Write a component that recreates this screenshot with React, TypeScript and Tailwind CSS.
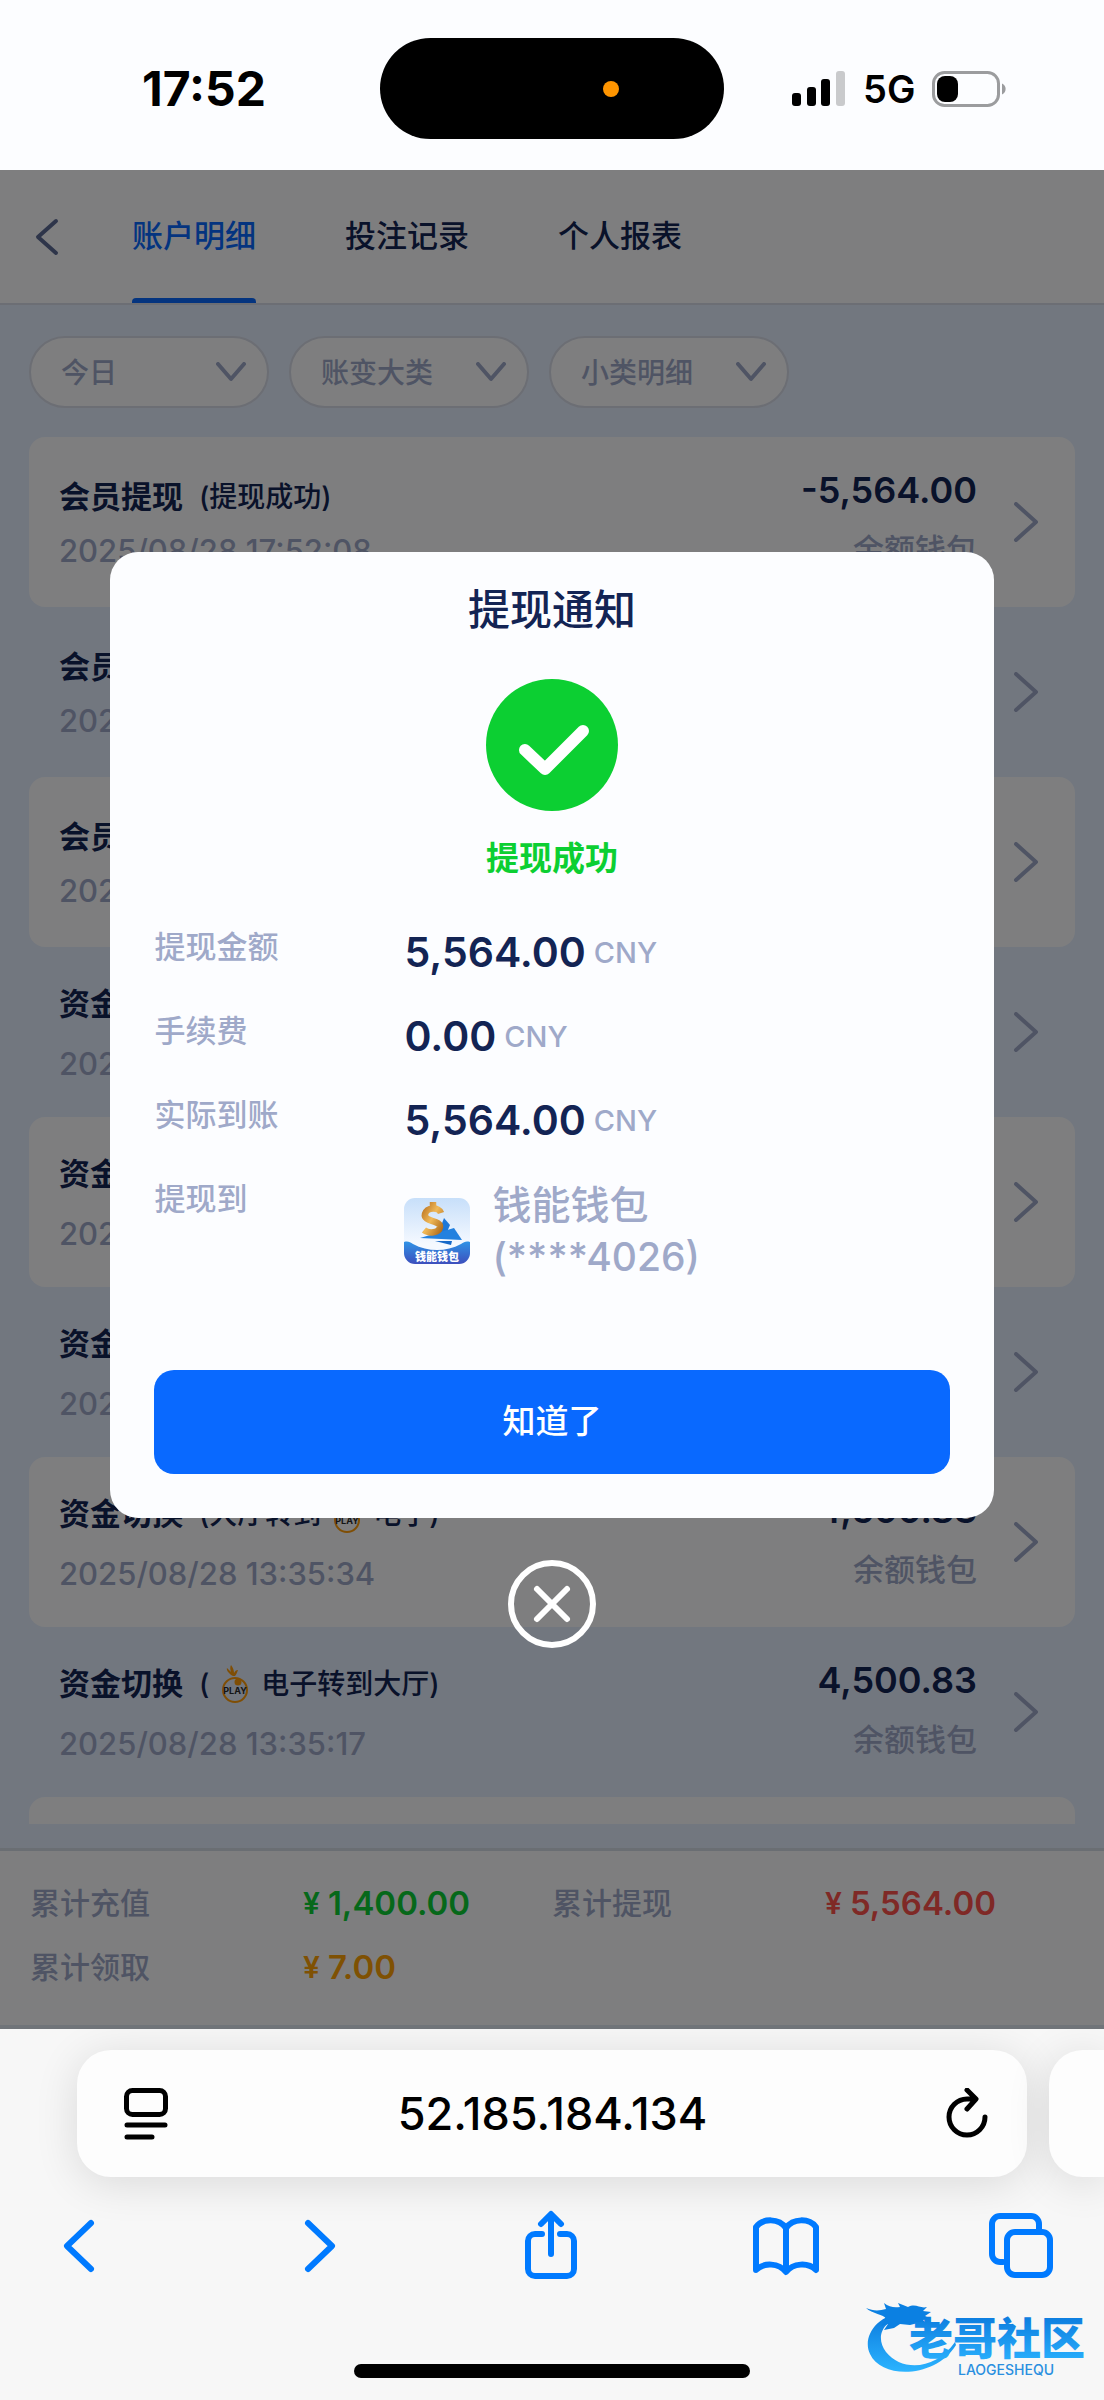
import type { ReactNode } from "react";

type RecordItem = {
  title: string;
  before?: string;
  after: string;
  logo?: boolean;
  time: string;
  amount: string;
};

const tabs = ["账户明细", "投注记录", "个人报表"];
const filters = ["今日", "账变大类", "小类明细"];

const records: RecordItem[] = [
  { title: "会员提现", after: "提现成功)", time: "2025/08/28 17:52:08", amount: "-5,564.00" },
  { title: "会员提现", after: "提现中)", time: "2025/08/28 17:51:20", amount: "-5,564.00" },
  { title: "会员提现", after: "申请提现)", time: "2025/08/28 17:50:46", amount: "-5,564.00" },
  { title: "资金切换", logo: true, after: "电子转到大厅)", time: "2025/08/28 17:49:52", amount: "5,564.83" },
  { title: "资金切换", logo: true, before: "大厅转到", after: "电子)", time: "2025/08/28 13:42:11", amount: "-4,500.83" },
  { title: "资金切换", logo: true, after: "电子转到大厅)", time: "2025/08/28 13:38:06", amount: "4,500.83" },
  { title: "资金切换", logo: true, before: "大厅转到", after: "电子)", time: "2025/08/28 13:35:34", amount: "-4,500.83" },
  { title: "资金切换", logo: true, after: "电子转到大厅)", time: "2025/08/28 13:35:17", amount: "4,500.83" },
];

const totals = [
  { label: "累计充值", value: "1,400.00", color: "text-[#0cd035]" },
  { label: "累计提现", value: "5,564.00", color: "text-[#ff524c]" },
  { label: "累计领取", value: "7.00", color: "text-[#ffa206]" },
];

const amounts = [
  { label: "提现金额", value: "5,564.00" },
  { label: "手续费", value: "0.00" },
  { label: "实际到账", value: "5,564.00" },
];

function StatusBar() {
  return (
    <header className="grid h-[170px] grid-cols-[1fr_344px_1fr] items-center bg-[#fcfdff] pt-[7px] text-black">
      <div className="pl-7 text-center text-[48px] leading-none font-bold">17:52</div>
      <div className="flex h-[101px] items-center justify-end rounded-full bg-black pr-[105px]">
        <span className="size-4 rounded-full bg-[#ff9500]" />
      </div>
      <div className="flex items-center gap-[17px] pl-[68px]">
        <svg className="h-[36px] w-[54px]" viewBox="0 0 54 36">
          <rect x="0" y="22" width="9" height="13" rx="3" />
          <rect x="15" y="16" width="9" height="19" rx="3" />
          <rect x="29" y="8" width="9" height="27" rx="3" />
          <rect x="44" y="0" width="9" height="35" rx="3" fill="#c9cacc" />
        </svg>
        <span className="text-[38px] leading-none font-semibold">5G</span>
        <svg className="h-[36px] w-[75px]" viewBox="0 0 75 36">
          <rect x="1.5" y="1.5" width="65" height="33" rx="11" fill="none" stroke="#9b9c9e" strokeWidth="3" />
          <rect x="5" y="5" width="21" height="26" rx="8" />
          <path d="M70 12.5a6 6 0 0 1 0 11z" fill="#9b9c9e" />
        </svg>
      </div>
    </header>
  );
}

function PlayLogo() {
  return (
    <svg className="mx-[12px] h-[38px] w-[28px]" viewBox="0 0 28 38">
      <path d="M12 11C8 9 5 5 6 3l4 4C9 4 9 2 10 0c2 3 3 5 3 8 1-2 2-3 4-3-1 3-2 5-3 6z" fill="#ff9d0a" />
      <circle cx="14" cy="25" r="12" fill="none" stroke="#ff9d0a" strokeWidth="2" />
      <circle cx="17" cy="17" r="3.500" fill="#ff9d0a" />
      <text x="14" y="29" textAnchor="middle" fontSize="9" fontWeight="700" fill="#2a2a2a">
        PLAY
      </text>
    </svg>
  );
}

function Record({ item, striped }: { item: RecordItem; striped: boolean }) {
  return (
    <li
      className={`flex h-[170px] items-center rounded-2xl pr-[36px] pl-[30px] ${striped ? "bg-[#fcfdff]" : ""}`}
    >
      <div className={`flex flex-1 flex-col pt-[4px] ${item.logo ? "gap-[20px]" : "gap-[14px]"}`}>
        <div className="flex h-10 items-center text-[28px] leading-[40px] font-medium text-[#132454]">
          <h3 className="mr-4 text-[31px] font-bold">{item.title}</h3>
          <span>({item.before}</span>
          {item.logo && <PlayLogo />}
          <span>{item.after}</span>
        </div>
        <time className="text-[31px] leading-[40px] font-medium text-[#9fa9c9]">{item.time}</time>
      </div>
      <div className="flex flex-col items-end gap-5 pb-1">
        <span className="text-[36px] leading-[40px] font-semibold text-[#132454]">{item.amount}</span>
        <span className="text-[31px] leading-[40px] font-medium text-[#9fa9c9]">余额钱包</span>
      </div>
      <svg className="ml-[36px] h-[40px] w-[26px]" viewBox="0 0 26 40" fill="none" stroke="#9fa9c9" strokeWidth="4" strokeLinecap="round" strokeLinejoin="round">
        <path d="M3 2l20 18L3 38" />
      </svg>
    </li>
  );
}

function WalletIcon() {
  return (
    <svg className="size-[66px] shrink-0" viewBox="0 0 66 66">
      <defs>
        <linearGradient id="walletSky" x1="0" y1="0" x2="0" y2="1">
          <stop offset="0" stopColor="#c7dffa" />
          <stop offset="0.7" stopColor="#f5f9ff" />
        </linearGradient>
        <linearGradient id="walletBand" x1="0" y1="0" x2="0" y2="1">
          <stop offset="0" stopColor="#3093e6" />
          <stop offset="1" stopColor="#3d4fbd" />
        </linearGradient>
        <linearGradient id="walletGold" x1="0" y1="0" x2="1" y2="1">
          <stop offset="0" stopColor="#b8701f" />
          <stop offset="0.5" stopColor="#f0b958" />
          <stop offset="1" stopColor="#b06c1c" />
        </linearGradient>
        <clipPath id="walletClip">
          <rect width="66" height="66" rx="11" />
        </clipPath>
      </defs>
      <g clipPath="url(#walletClip)">
        <rect width="66" height="66" fill="url(#walletSky)" />
        <path d="M40 20l6 7-3 7-9 2z" fill="#1e78d8" />
        <path d="M16 40l34-10 8 12z" fill="#2381df" />
        <path d="M31 43h17l-1 4z" fill="#1769c8" />
        <path d="M37 15c-2-6-14-6-16 1-2 8 16 6 15 13-1 6-11 7-16 3M29 4v5" fill="none" stroke="url(#walletGold)" strokeWidth="6.500" strokeLinejoin="round" />
        <path d="M0 44c4-1 6 0 9 2 15 8 33 8 48 0 3-2 5-3 9-2v22H0z" fill="url(#walletBand)" />
        <text x="33" y="63" textAnchor="middle" fontSize="11" fontWeight="900" fill="#fff">
          钱能钱包
        </text>
      </g>
    </svg>
  );
}

function WithdrawDialog() {
  return (
    <div className="absolute inset-0 flex flex-col items-center justify-center gap-[42px] bg-black/50">
      <section
        role="dialog"
        aria-labelledby="dialog-title"
        className="flex w-[80%] flex-col rounded-[28px] bg-[#fcfdff] px-11 pt-7 pb-11 text-[#132454]"
      >
        <h2 id="dialog-title" className="text-center text-[42px] leading-[60px] font-medium">
          提现通知
        </h2>
        <svg className="mx-auto mt-[39px] size-[132px]" viewBox="0 0 132 132">
          <circle cx="66" cy="66" r="66" fill="#0ccf32" />
          <path d="M39 71l20 19 38-38" fill="none" stroke="#fff" strokeWidth="12" strokeLinecap="round" strokeLinejoin="round" />
        </svg>
        <p className="mt-6 text-center text-[33px] leading-[46px] font-bold text-[#0ccf32]">提现成功</p>

        <dl className="mt-7">
          {amounts.map((row) => (
            <div key={row.label} className="flex h-[84px] items-start">
              <dt className="w-[250px] text-[31px] leading-[76px] font-medium text-[#9fa9c9]">{row.label}</dt>
              <dd className="flex items-center gap-[8px] leading-[84px]">
                <span className="text-[41px] font-semibold">{row.value}</span>
                <span className="pt-[2px] text-[29px] font-medium text-[#9fa9c9]">CNY</span>
              </dd>
            </div>
          ))}
          <div className="flex items-start font-medium text-[#9fa9c9]">
            <dt className="w-[250px] text-[31px] leading-[76px]">提现到</dt>
            <dd className="flex items-center gap-[22px] pt-[18px] text-[39px] leading-[52px]">
              <WalletIcon />
              <span>
                钱能钱包
                <br />
                (****4026)
              </span>
            </dd>
          </div>
        </dl>

        <button type="button" className="mt-[87px] h-[104px] rounded-[20px] bg-[#0969ff] text-[33px] font-medium text-white">
          知道了
        </button>
      </section>
      <button type="button" aria-label="关闭">
        <svg className="size-[88px]" viewBox="0 0 88 88" fill="none" stroke="#fff" strokeWidth="6" strokeLinecap="round">
          <circle cx="44" cy="44" r="41" />
          <path d="M29 29l30 30M59 29L29 59" />
        </svg>
      </button>
    </div>
  );
}

function AccountPage() {
  return (
    <main className="relative flex flex-col bg-[#e5eefe]">
      <nav className="flex h-[135px] items-stretch border-b-2 border-[#d8dce8] bg-[#fcfdff]">
        <button type="button" aria-label="返回" className="w-[132px] pl-[35px]">
          <svg className="h-[38px] w-[24px]" viewBox="0 0 24 38" fill="none" stroke="#5c6a95" strokeWidth="4" strokeLinecap="round" strokeLinejoin="round">
            <path d="M21 3L3 19l18 16" />
          </svg>
        </button>
        <div className="flex gap-[89px] text-[31px] font-medium">
          {tabs.map((tab, i) => (
            <button
              key={tab}
              type="button"
              className={`relative ${i === 0 ? "text-[#0969ff]" : "text-[#132454]"}`}
            >
              {tab}
              {i === 0 && <span className="absolute inset-x-0 bottom-0 h-[5px] rounded-t-[4px] bg-[#0969ff]" />}
            </button>
          ))}
        </div>
      </nav>

      <div className="flex gap-5 px-[29px] pt-[31px]">
        {filters.map((name) => (
          <div key={name} className="relative w-[240px]">
            <select
              aria-label={name}
              className="h-[72px] w-full appearance-none rounded-full border-2 border-[#d8dce8] bg-[#fcfdff] pt-[2px] pl-[30px] text-[28px] font-medium text-[#9fa9c9]"
            >
              <option>{name}</option>
            </select>
            <svg className="pointer-events-none absolute top-[26px] right-[22px] h-[20px] w-[31px]" viewBox="0 0 31 20" fill="none" stroke="#9fa9c9" strokeWidth="4" strokeLinecap="round" strokeLinejoin="round">
              <path d="M2 2l13 15L28 2" />
            </svg>
          </div>
        ))}
      </div>

      <ul className="mt-[29px] px-[29px]">
        {records.map((item, i) => (
          <Record key={item.time} item={item} striped={i % 2 === 0} />
        ))}
        <li className="h-[27px] rounded-t-2xl bg-[#fcfdff]" />
      </ul>

      <footer className="mt-6 border-t-[3px] border-b-[4px] border-t-[#d5dce6] border-b-[#e0e8f2] bg-[#fcfdff] px-[30px] pt-[20px] pb-[26px]">
        <dl className="grid grid-cols-2 text-[30px] leading-[64px] font-medium">
          {totals.map((total) => (
            <div key={total.label} className="flex">
              <dt className="w-[273px] text-[#9fa9c9]">{total.label}</dt>
              <dd className={`flex gap-[8px] font-semibold ${total.color}`}>
                <span>¥</span>
                <span className="text-[33px]">{total.value}</span>
              </dd>
            </div>
          ))}
        </dl>
      </footer>

      <WithdrawDialog />
    </main>
  );
}

function ToolButton({ label, children }: { label: string; children: ReactNode }) {
  return (
    <button type="button" aria-label={label}>
      <svg className="size-[72px]" viewBox="0 0 72 72" fill="none" stroke="#007aff" strokeWidth="6" strokeLinecap="round" strokeLinejoin="round">
        {children}
      </svg>
    </button>
  );
}

function CommunityLogo() {
  return (
    <svg className="absolute right-[14px] bottom-[22px] h-[82px] w-[226px]" viewBox="0 0 226 82">
      <defs>
        <linearGradient id="communityBlue" x1="0" y1="0" x2="0" y2="1">
          <stop offset="0" stopColor="#0a78dc" />
          <stop offset="1" stopColor="#2cb4ff" />
        </linearGradient>
      </defs>
      <path d="M40 17C12 18-2 42 6 58c12 26 66 24 86-9l-1-3C72 74 38 76 22 56 10 40 20 22 44 20z" fill="url(#communityBlue)" />
      <path d="M2 12c7 3 13 3 20 1l-2-6c5 4 10 5 16 4l-2-4 10 4c8-4 12 2 19 0l-4 4 8 1-6 4 6 3-8 1 5 5-10-2-8 2-10-1-6 4-10 2 4-6-7 2 5-7C20 18 8 18 2 12z" fill="#0b80e2" />
      <text x="45" y="59" fontSize="44" fontWeight="900" fill="url(#communityBlue)">
        老哥社区
      </text>
      <text x="94" y="79" fontSize="14" fontWeight="500" fill="#2a8fe0">
        LAOGESHEQU
      </text>
    </svg>
  );
}

function BrowserBar() {
  return (
    <footer className="relative h-[371px] overflow-hidden bg-[#f7f7f7]">
      <div className="flex gap-[22px] pt-[21px] pl-[77px]">
        <div className="flex h-[127px] flex-1 items-center rounded-[34px] bg-[#fdfdfd] pr-[38px] pl-[47px] shadow-[0_6px_44px_rgba(0,0,0,0.12)]">
          <button type="button" aria-label="页面菜单">
            <svg className="h-[52px] w-[44px]" viewBox="0 0 44 52" fill="none" stroke="#000" strokeWidth="5" strokeLinecap="round">
              <rect x="2.500" y="2.500" width="39" height="24" rx="6" />
              <path d="M3 37h38M3 49h25" />
            </svg>
          </button>
          <input
            aria-label="地址"
            defaultValue="52.185.184.134"
            className="min-w-0 flex-1 bg-transparent pr-2 text-center text-[45px] font-medium text-black outline-none"
          />
          <button type="button" aria-label="刷新">
            <svg className="h-[52px] w-[44px]" viewBox="0 0 44 52" fill="none" stroke="#000" strokeWidth="5" strokeLinecap="round" strokeLinejoin="round">
              <path d="M40 29A18 18 0 1 1 22 11h8M22 2l9 9-9 10" />
            </svg>
          </button>
        </div>
        <div className="h-[127px] w-[55px] rounded-l-[34px] bg-[#fdfdfd] shadow-[0_6px_44px_rgba(0,0,0,0.12)]" />
      </div>

      <div className="flex justify-between px-[44px] pt-[33px]">
        <ToolButton label="后退">
          <path d="M47 13L23 36l24 23" />
        </ToolButton>
        <ToolButton label="前进">
          <path d="M28 13l24 23-24 23" />
        </ToolButton>
        <ToolButton label="分享">
          <path d="M26 24h-7a7 7 0 0 0-7 7v28a7 7 0 0 0 7 7h32a7 7 0 0 0 7-7V31a7 7 0 0 0-7-7h-7M35 44V5M25 14L35 4l10 10" />
        </ToolButton>
        <ToolButton label="书签">
          <path d="M34 18C27 8 11 8 4 17v43c8-8 23-7 30 2 7-9 22-10 30-2V17C57 8 41 8 34 18zM34 18v43" />
        </ToolButton>
        <ToolButton label="标签页">
          <path d="M15 52h-3a8 8 0 0 1-8-8V14a8 8 0 0 1 8-8h31a8 8 0 0 1 8 8v6" />
          <rect x="19" y="22" width="43" height="43" rx="8" />
        </ToolButton>
      </div>

      <div className="mx-auto mt-[82px] h-[14px] w-[396px] rounded-full bg-black" />
      <CommunityLogo />
    </footer>
  );
}

export default function App() {
  return (
    <div className="flex flex-col font-['Inter','Noto_Sans_CJK_SC',sans-serif]">
      <StatusBar />
      <AccountPage />
      <BrowserBar />
    </div>
  );
}
